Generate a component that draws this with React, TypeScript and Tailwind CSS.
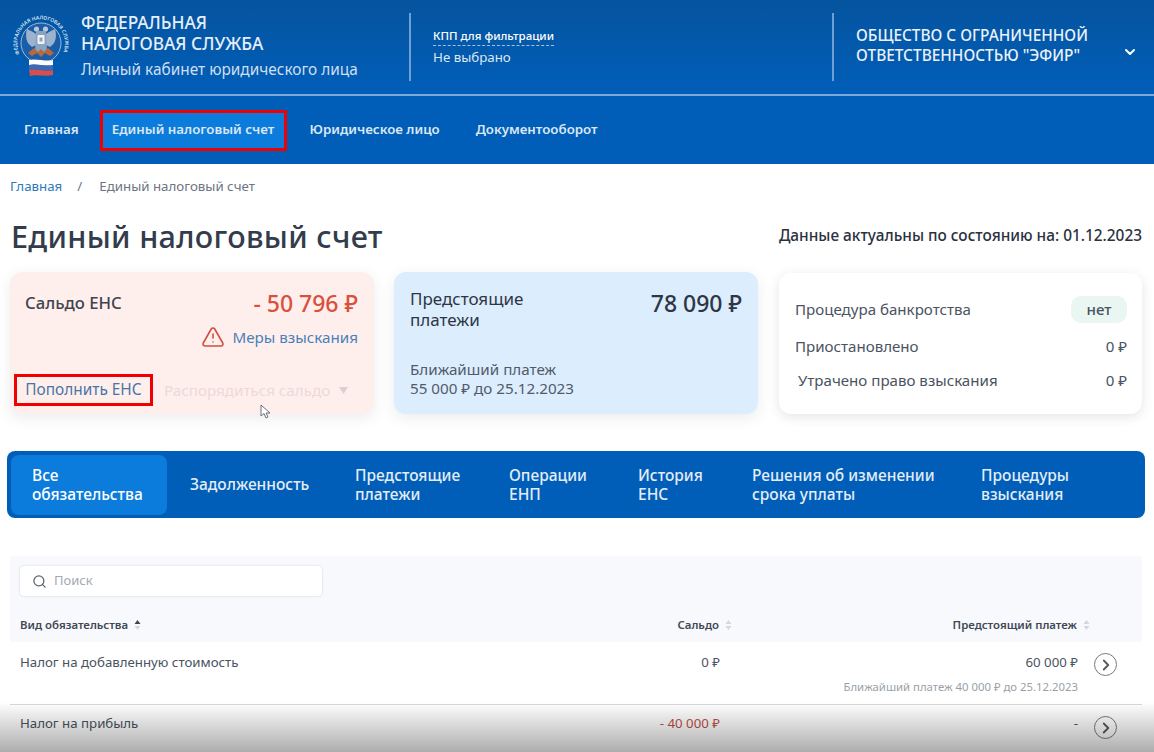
import { ChevronDown, ChevronRight, Search, TriangleAlert } from "lucide-react";

const NAV = ["Главная", "Единый налоговый счет", "Юридическое лицо", "Документооборот"];

const TABS = [
  { label: "Все\nобязательства", w: "w-[156px]", active: true },
  { label: "Задолженность", w: "w-[165px]" },
  { label: "Предстоящие\nплатежи", w: "w-[154px]" },
  { label: "Операции\nЕНП", w: "w-[129px]" },
  { label: "История\nЕНС", w: "w-[114px]" },
  { label: "Решения об изменении\nсрока уплаты", w: "w-[229px]" },
  { label: "Процедуры\nвзыскания", w: "w-[150px]" },
];

function Logo() {
  return (
    <svg width="58" height="66" viewBox="0 0 58 66" className="shrink-0">
      <defs>
        <path id="fns-ring" d="M7.5 40 A24 24 0 1 1 50.5 40" fill="none" />
      </defs>
      <text fontSize="5" fontWeight="600" fill="#d5e3f3" fontFamily="Noto Sans, sans-serif">
        <textPath href="#fns-ring" textLength="95" lengthAdjust="spacingAndGlyphs">
          ФЕДЕРАЛЬНАЯ НАЛОГОВАЯ СЛУЖБА
        </textPath>
      </text>
      <circle cx="29" cy="29" r="20" fill="#1a5ea8" stroke="#b9d0ea" strokeWidth="0.8" />
      {/* eagle wings and heads */}
      <path d="M15 15 C13 22 14 29 20 33 L24 31 L24 20 L21 18 Z" fill="#9db2cd" />
      <path d="M43 15 C45 22 44 29 38 33 L34 31 L34 20 L37 18 Z" fill="#9db2cd" />
      <circle cx="24.5" cy="15" r="2.6" fill="#b7c6da" />
      <circle cx="33.5" cy="15" r="2.6" fill="#b7c6da" />
      <path d="M24 17 H34 L35 37 L29 41 L23 37 Z" fill="#8ba2c0" />
      <rect x="25.5" y="21" width="7" height="9" rx="1" fill="#f0f4f9" />
      <rect x="27.5" y="23.5" width="3" height="4" fill="#8ba2c0" />
      {/* ribbon under the eagle */}
      <path d="M16 39 L22 34 L26 38 L29 35 L32 38 L36 34 L42 39 L38 42 L33 39 L29 43 L25 39 L20 42 Z" fill="#b8683f" />
      {/* flag */}
      <path d="M17 46 C24 44 34 48 41 46 L41 51 C34 53 24 49 17 51 Z" fill="#ffffff" />
      <path d="M17 51 C24 49 34 53 41 51 L41 56 C34 58 24 54 17 56 Z" fill="#3f68b4" />
      <path d="M17 56 C24 54 34 58 41 56 L41 61 C34 63 24 60 18 62 Z" fill="#d2504e" />
    </svg>
  );
}

function SortIcon({ up }: { up?: boolean }) {
  return (
    <svg width="7" height="12" viewBox="0 0 7 12">
      <path d="M3.5 1 L6.5 5 L0.5 5 Z" fill={up ? "#3b4657" : "#d3d8e0"} />
      <path d="M3.5 11 L6.5 7 L0.5 7 Z" fill="#d3d8e0" />
    </svg>
  );
}

function RowButton() {
  return (
    <div className="flex h-[23px] w-[23px] items-center justify-center rounded-full border border-[#77797d] text-[#55585d]">
      <ChevronRight className="h-[18px] w-[18px]" strokeWidth={2.4} />
    </div>
  );
}

export default function App() {
  return (
    <div className="relative h-[752px] w-[1154px] overflow-hidden bg-white font-['Noto_Sans','Open_Sans',sans-serif] text-[#3b4657]">
      {/* Header */}
      <header className="flex h-[94px] items-center bg-gradient-to-b from-[#05549f] to-[#005eb8] text-white">
        <div className="flex w-[409px] items-center pl-[12px]">
          <Logo />
          <div className="ml-[11px] mt-[-3px]">
            <div className="text-[17.3px] font-medium leading-[21px] text-[#e6eef8]">
              ФЕДЕРАЛЬНАЯ
              <br />
              НАЛОГОВАЯ СЛУЖБА
            </div>
            <div className="mt-[6px] text-[15.4px] leading-[20px] text-[#cfdff2]">Личный кабинет юридического лица</div>
          </div>
        </div>
        <div className="flex h-[68px] w-[423px] flex-col justify-center border-l-2 border-[#6f9fd3] pl-[22px]">
          <div className="w-fit border-b border-dashed border-[#9fc3e6] pb-[2px] text-[11.5px] font-medium leading-[14px]">
            КПП для фильтрации
          </div>
          <div className="mt-[2px] text-[13.3px] leading-[18px] text-[#dce8f5]">Не выбрано</div>
        </div>
        <div className="flex h-[68px] flex-1 items-center border-l-2 border-[#6f9fd3] pl-[22px]">
          <div className="mt-[-2px] w-[266px] text-[15.4px] font-medium leading-[20px] text-[#eaf1f9]">
            ОБЩЕСТВО С ОГРАНИЧЕННОЙ
            <br />
            ОТВЕТСТВЕННОСТЬЮ "ЭФИР"
          </div>
          <ChevronDown className="mt-[10px] h-[16px] w-[16px]" strokeWidth={3} />
        </div>
      </header>

      {/* Nav */}
      <nav className="flex h-[70px] items-center border-t-2 border-[#7eaadb] bg-[#005eb8] pl-[24px] text-[13.3px] font-semibold text-[#dbe7f4]">
        {NAV.map((item, i) =>
          i === 1 ? (
            <div key={item} className="ml-[21px] mr-[23px] flex h-[41px] w-[187px] items-center justify-center rounded-[1px] border-[3px] border-[#f00000] bg-[#0b7cdb] p-0">
              {item}
            </div>
          ) : (
            <div key={item} className={i === 3 ? "ml-[36px]" : ""}>
              {item}
            </div>
          )
        )}
      </nav>

      {/* Breadcrumbs */}
      <div className="flex h-[46px] items-center pl-[10px] text-[13.3px] text-[#6c7583]">
        <span className="text-[#2f7ab8]">Главная</span>
        <span className="ml-[15px] mr-[17px]">/</span>
        <span>Единый налоговый счет</span>
      </div>

      {/* Title */}
      <div className="flex h-[62px] items-center justify-between pb-[8px] pl-[11px] pr-[12px]">
        <h1 className="text-[30.6px] font-medium tracking-[0.3px] text-[#333c4c]">Единый налоговый счет</h1>
        <div className="mt-[-2px] text-[15.4px] font-medium text-[#2a3240]">Данные актуальны по состоянию на: 01.12.2023</div>
      </div>

      {/* Cards */}
      <div className="flex gap-[20px] pl-[10px]">
        <div className="flex h-[142px] w-[364px] flex-col rounded-[12px] bg-[#ffefec] pt-[16px] shadow-[0_4px_14px_rgba(60,70,90,0.1)]">
          <div className="flex items-center justify-between pl-[15px] pr-[16px]">
            <span className="text-[16.7px] font-medium text-[#3f4550]">Сальдо ЕНС</span>
            <span className="text-[23px] font-medium leading-[30px] text-[#d9503c]">- 50 796 ₽</span>
          </div>
          <div className="mt-[7px] flex items-center justify-end gap-[7px] pr-[16px]">
            <TriangleAlert className="h-[24px] w-[24px] text-[#cf4f42]" strokeWidth={1.6} />
            <span className="text-[15.2px] text-[#4b7fbb]">Меры взыскания</span>
          </div>
          <div className="mt-[25px] flex items-center">
            <div className="ml-[4px] flex h-[32px] w-[139px] items-center justify-center border-[3px] border-[#f00000] text-[15.4px] text-[#4a74a5]">
              Пополнить ЕНС
            </div>
            <span className="ml-[11px] text-[15.2px] text-[#ecd9d8]">Распорядиться сальдо</span>
            <svg width="9" height="7" viewBox="0 0 9 7" className="ml-[9px]">
              <path d="M0 0 H9 L4.5 7 Z" fill="#d9d0d2" />
            </svg>
          </div>
        </div>

        <div className="flex h-[142px] w-[364px] flex-col rounded-[12px] bg-[#dcedfe] pl-[16px] pr-[16px] pt-[16px] shadow-[0_4px_14px_rgba(60,70,90,0.1)]">
          <div className="flex items-start justify-between">
            <span className="text-[17px] font-normal leading-[21px] text-[#2e3644]">
              Предстоящие
              <br />
              платежи
            </span>
            <span className="text-[23px] font-medium leading-[30px] text-[#2e3644]">78 090 ₽</span>
          </div>
          <div className="mt-[30px] text-[15.2px] leading-[19px] text-[#515b6a]">
            Ближайший платеж
            <br />
            55 000 ₽ до 25.12.2023
          </div>
        </div>

        <div className="ml-[1px] mt-[1px] flex h-[141px] w-[363px] flex-col rounded-[12px] bg-white pl-[16px] pr-[15px] pt-[22px] text-[15.1px] text-[#4a5361] shadow-[0_3px_12px_rgba(60,70,90,0.14)]">
          <div className="flex h-[28px] items-center justify-between">
            <span>Процедура банкротства</span>
            <span className="flex h-[27px] w-[56px] items-center justify-center rounded-[10px] bg-[#e9f6f2] font-medium">нет</span>
          </div>
          <div className="mt-[12px] flex h-[22px] items-center justify-between">
            <span>Приостановлено</span>
            <span>0 ₽</span>
          </div>
          <div className="mt-[12px] flex h-[22px] items-center justify-between">
            <span className="pl-[3px]">Утрачено право взыскания</span>
            <span>0 ₽</span>
          </div>
        </div>
      </div>

      {/* Tabs */}
      <div className="ml-[7px] mt-[37px] flex h-[67px] w-[1138px] items-center rounded-[8px] bg-[#005eb8] pl-[4px] text-[15.5px] font-medium leading-[19px] text-[#e3edf7]">
        {TABS.map((tab) => (
          <div
            key={tab.label}
            className={`flex h-[60px] shrink-0 items-center whitespace-pre-line ${tab.w} ${
              tab.active ? "rounded-[8px] bg-[#0b7cdb] pl-[21px] text-white" : "pl-[23px]"
            }`}
          >
            {tab.label}
          </div>
        ))}
      </div>

      {/* Table */}
      <div className="ml-[10px] mt-[38px] w-[1132px]">
        <div className="h-[86px] bg-[#f8f9fc] pl-[10px] pt-[10px]">
          <div className="flex h-[30px] w-[302px] items-center rounded-[4px] bg-white pl-[12px] text-[13px] text-[#a3a9b2] shadow-[0_0_2px_rgba(60,70,90,0.25)]">
            <Search className="h-[15px] w-[15px] text-[#5d646e]" strokeWidth={2} />
            <span className="ml-[7px]">Поиск</span>
          </div>
          <div className="mt-[14px] flex h-[30px] items-center text-[11.4px] font-semibold text-[#3f4856]">
            <div className="flex w-[560px] items-center gap-[6px]">
              Вид обязательства <SortIcon up />
            </div>
            <div className="flex w-[152px] items-center justify-end gap-[6px]">
              Сальдо <SortIcon />
            </div>
            <div className="flex w-[358px] items-center justify-end gap-[6px]">
              Предстоящий платеж <SortIcon />
            </div>
          </div>
        </div>

        <div className="flex h-[63px] border-b border-[#d5d8dd] pl-[10px] pt-[11px] text-[13.25px] text-[#4a5361]">
          <div className="w-[560px]">Налог на добавленную стоимость</div>
          <div className="w-[140px] text-right">0 ₽</div>
          <div className="w-[358px] text-right">
            <div>60 000 ₽</div>
            <div className="mt-[5px] text-[11.35px] text-[#9a9fa7]">Ближайший платеж 40 000 ₽ до 25.12.2023</div>
          </div>
          <div className="ml-[16px]">
            <RowButton />
          </div>
        </div>

        <div className="flex h-[46px] pl-[10px] pt-[9px] text-[13.25px] text-[#4a5361]">
          <div className="w-[560px]">Налог на прибыль</div>
          <div className="w-[140px] text-right text-[#bf5142]">- 40 000 ₽</div>
          <div className="w-[358px] text-right">-</div>
          <div className="ml-[16px] mt-[2px]">
            <RowButton />
          </div>
        </div>
      </div>

      {/* Mouse pointer */}
      <svg width="12" height="16" viewBox="0 0 12 16" className="absolute left-[260px] top-[404px]">
        <path d="M1 1 L1 12 L4 9.5 L6 14 L8 13 L6 9 L10 9 Z" fill="#fff" stroke="#6b6f76" strokeWidth="1" />
      </svg>

      {/* Video fade at the bottom */}
      <div className="pointer-events-none absolute inset-x-0 bottom-0 h-[50px] bg-gradient-to-b from-[#ffffff00] to-[#00000052]" />
    </div>
  );
}
